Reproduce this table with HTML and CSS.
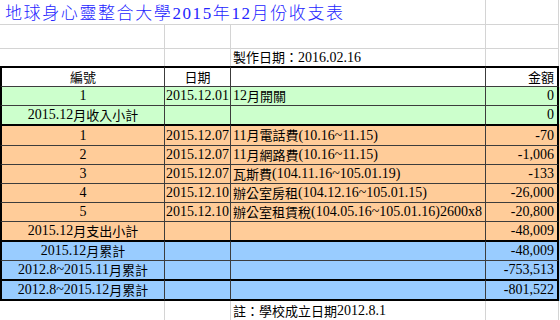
FILE: index.html
```html
<!DOCTYPE html>
<html lang="zh-Hant">
<head>
    <meta charset="UTF-8">
    <title>2015年12月份收支表</title>
    <link rel="stylesheet" href="styles.css">
</head>
<body>

<div class="sheet">
    <div class="row h-title">
        <div class="cell span3 title">地球身心靈整合大學2015年12月份收支表</div>
        <div class="cell"></div>
    </div>
    <div class="row h-blank">
        <div class="cell"></div><div class="cell"></div><div class="cell"></div><div class="cell"></div>
    </div>
    <div class="row h-date no-bottom">
        <div class="cell"></div><div class="cell"></div>
        <div class="cell l"><span class="k">製作日期：</span>2016.02.16</div>
        <div class="cell"></div>
    </div>

    <!-- table starts here -->
    <div class="row tbl thick-top h-21">
        <div class="cell c"><span class="k">編號</span></div>
        <div class="cell c"><span class="k">日期</span></div>
        <div class="cell"></div>
        <div class="cell r"><span class="k">金額</span></div>
    </div>
    <div class="row tbl green h-19">
        <div class="cell c">1</div>
        <div class="cell c">2015.12.01</div>
        <div class="cell l">12<span class="k">月開關</span></div>
        <div class="cell r">0</div>
    </div>
    <div class="row tbl green h-18 no-bottom">
        <div class="cell c">2015.12<span class="k">月收入小計</span></div>
        <div class="cell"></div>
        <div class="cell"></div>
        <div class="cell r">0</div>
    </div>

    <div class="row tbl orange thick-top h-22">
        <div class="cell c">1</div>
        <div class="cell c">2015.12.07</div>
        <div class="cell l">11<span class="k">月電話費</span>(10.16~11.15)</div>
        <div class="cell r">-70</div>
    </div>
    <div class="row tbl orange h-19">
        <div class="cell c">2</div>
        <div class="cell c">2015.12.07</div>
        <div class="cell l">11<span class="k">月網路費</span>(10.16~11.15)</div>
        <div class="cell r">-1,006</div>
    </div>
    <div class="row tbl orange h-19">
        <div class="cell c">3</div>
        <div class="cell c">2015.12.07</div>
        <div class="cell l"><span class="k">瓦斯費</span>(104.11.16~105.01.19)</div>
        <div class="cell r">-133</div>
    </div>
    <div class="row tbl orange h-19">
        <div class="cell c">4</div>
        <div class="cell c">2015.12.10</div>
        <div class="cell l"><span class="k">辦公室房租</span>(104.12.16~105.01.15)</div>
        <div class="cell r">-26,000</div>
    </div>
    <div class="row tbl orange h-19">
        <div class="cell c">5</div>
        <div class="cell c">2015.12.10</div>
        <div class="cell l"><span class="k">辦公室租賃稅</span>(104.05.16~105.01.16)2600x8</div>
        <div class="cell r">-20,800</div>
    </div>
    <div class="row tbl orange h-18 no-bottom">
        <div class="cell c">2015.12<span class="k">月支出小計</span></div>
        <div class="cell"></div>
        <div class="cell"></div>
        <div class="cell r">-48,009</div>
    </div>

    <div class="row tbl blue thick-top h-21">
        <div class="cell c">2015.12<span class="k">月累計</span></div>
        <div class="cell"></div>
        <div class="cell"></div>
        <div class="cell r">-48,009</div>
    </div>
    <div class="row tbl blue h-18 no-bottom">
        <div class="cell c">2012.8~2015.11<span class="k">月累計</span></div>
        <div class="cell"></div>
        <div class="cell"></div>
        <div class="cell r">-753,513</div>
    </div>
    <div class="row tbl blue thick-top thick-bottom h-22">
        <div class="cell c">2012.8~2015.12<span class="k">月累計</span></div>
        <div class="cell"></div>
        <div class="cell"></div>
        <div class="cell r">-801,522</div>
    </div>

    <div class="row h-20 no-bottom">
        <div class="cell"></div><div class="cell"></div>
        <div class="cell l"><span class="k">註：學校成立日期</span>2012.8.1</div>
        <div class="cell"></div>
    </div>
</div>

</body>
</html>
```

FILE: styles.css
```css
body {
    margin: 0;
    background-color: #ffffff;
    font-family: "Liberation Serif", "Noto Sans CJK TC", serif;
    font-size: 14px;
    color: #000000;
    overflow: hidden;
}
.sheet {
    width: 560px;
    height: 320px;
}
.row {
    display: grid;
    grid-template-columns: 165px 66px 255px 73px;
}
.cell {
    box-sizing: border-box;
    display: flex;
    align-items: center;
    white-space: nowrap;
    overflow: visible;
    border-right: 1px solid #d4d4d4;
    border-bottom: 1px solid #d4d4d4;
    line-height: 1;
}
/* CJK runs are a bit smaller than the latin digits */
.k {
    font-size: 13px;
}
.span3 {
    grid-column: span 3;
}
.no-bottom > .cell {
    border-bottom: none;
}

/* row heights */
.h-title { height: 25px; }
.h-blank { height: 24px; }
.h-date  { height: 17px; }
.h-18 { height: 18px; }
.h-19 { height: 19px; }
.h-20 { height: 20px; }
.h-21 { height: 21px; }
.h-22 { height: 22px; }

.title {
    padding-left: 5px;
    padding-top: 2px;
    font-size: 17px;
    font-weight: 300;
    letter-spacing: 1.6px;
    color: #2424ff;
}

/* table area */
.tbl > .cell {
    border-right: 1px solid #3c3c3c;
    border-bottom: 1px solid #3c3c3c;
}
.tbl.no-bottom > .cell {
    border-bottom: none;
}
.tbl > .cell:first-child {
    border-left: 2px solid #000000;
}
.tbl > .cell:last-child {
    border-right: 2px solid #000000;
}
.thick-top > .cell {
    border-top: 2px solid #000000;
}
.thick-bottom > .cell {
    border-bottom: 2px solid #000000;
}
.green  { background-color: #ccffcc; }
.orange { background-color: #ffcc99; }
.blue   { background-color: #99ccff; }

.c { justify-content: center; }
.l { padding-left: 2px; }
.r { justify-content: flex-end; padding-right: 3px; }
```
